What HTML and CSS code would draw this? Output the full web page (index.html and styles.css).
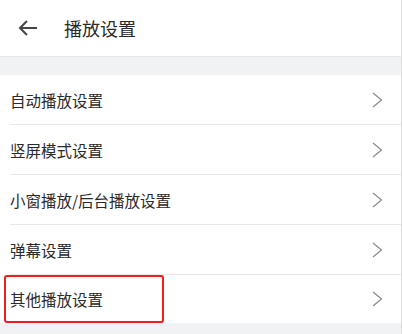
FILE: index.html
```html
<!DOCTYPE html>
<html lang="zh-CN">
<head>
  <meta charset="UTF-8" />
  <meta name="viewport" content="width=device-width, initial-scale=1.0" />
  <title>播放设置</title>
  <link rel="stylesheet" href="styles.css">
</head>
<body>

<div class="page">
  <div class="header">
    <svg class="back" width="20" height="16" viewBox="0 0 20 16">
      <path d="M19 8H2M9 1L2 8l7 7" fill="none" stroke="#444" stroke-width="2"/>
    </svg>
    <span class="title">播放设置</span>
  </div>

  <div class="band"></div>

  <ul class="list">
    <li class="row"><span>自动播放设置</span><svg class="chev" width="11" height="16" viewBox="0 0 11 16"><path d="M1 1l8.5 7L1 15" fill="none" stroke="#888" stroke-width="1.2"/></svg></li>
    <li class="row"><span>竖屏模式设置</span><svg class="chev" width="11" height="16" viewBox="0 0 11 16"><path d="M1 1l8.5 7L1 15" fill="none" stroke="#888" stroke-width="1.2"/></svg></li>
    <li class="row"><span>小窗播放/后台播放设置</span><svg class="chev" width="11" height="16" viewBox="0 0 11 16"><path d="M1 1l8.5 7L1 15" fill="none" stroke="#888" stroke-width="1.2"/></svg></li>
    <li class="row"><span>弹幕设置</span><svg class="chev" width="11" height="16" viewBox="0 0 11 16"><path d="M1 1l8.5 7L1 15" fill="none" stroke="#888" stroke-width="1.2"/></svg></li>
    <li class="row last"><span>其他播放设置</span><svg class="chev" width="11" height="16" viewBox="0 0 11 16"><path d="M1 1l8.5 7L1 15" fill="none" stroke="#888" stroke-width="1.2"/></svg><div class="highlight"></div></li>
  </ul>
</div>

</body>
</html>
```

FILE: styles.css
```css
html, body {
  margin: 0;
  padding: 0;
  background: #f1f2f4;
  font-family: "Noto Sans CJK SC", "Noto Sans", sans-serif;
  color: #2a2a2a;
}

.page {
  width: 401px;
  height: 334px;
  border-right: 1px solid #dcdcdc;
  background: #f1f2f4;
}

.header {
  height: 57px;
  background: #fff;
  display: flex;
  align-items: center;
  border-bottom: 1px solid #e6e6e6;
  box-sizing: border-box;
}

.back {
  margin-left: 18px;
  margin-right: 26px;
}

.title {
  font-size: 18px;
}

.band {
  height: 18px;
}

.list {
  list-style: none;
  margin: 0;
  padding: 0;
  background: #fff;
}

.row {
  position: relative;
  height: 50px;
  display: flex;
  align-items: center;
  justify-content: space-between;
  padding: 0 18px 0 10px;
  font-size: 15.5px;
}

.row::after {
  content: "";
  position: absolute;
  left: 10px;
  right: 0;
  bottom: 0;
  border-bottom: 1px solid #e8e8e8;
}

.row.last {
  height: 48px;
}

.row.last::after {
  display: none;
}

.highlight {
  position: absolute;
  left: 4px;
  top: 0;
  width: 160px;
  height: 48px;
  border: 2.5px solid #f41d1d;
  border-radius: 3px;
  box-sizing: border-box;
}
```
